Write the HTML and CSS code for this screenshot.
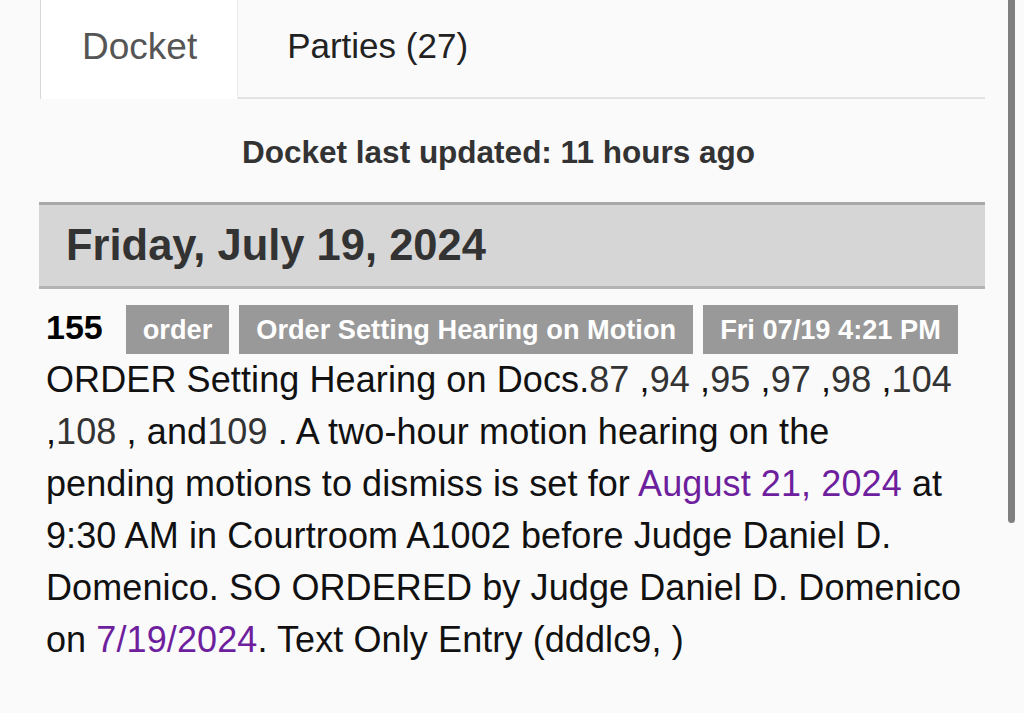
FILE: index.html
```html
<!DOCTYPE html>
<html lang="en">
<head>
<meta charset="utf-8">
<title>Docket</title>
<link rel="stylesheet" href="styles.css">
</head>
<body>
<div class="page">
  <nav class="tabs">
    <div class="tab tab-active">Docket</div>
    <div class="tab">Parties (27)</div>
  </nav>
  <p class="updated">Docket last updated: 11 hours ago</p>
  <h2 class="day">Friday, July 19, 2024</h2>
  <div class="entry">
    <div class="entry-head">
      <span class="entry-num">155</span>
      <span class="badge">order</span>
      <span class="badge">Order Setting Hearing on Motion</span>
      <span class="badge">Fri 07/19 4:21 PM</span>
    </div>
    <p class="entry-text">ORDER Setting Hearing on Docs.<a class="doc">87</a> ,<a class="doc">94</a> ,<a class="doc">95</a> ,<a class="doc">97</a> ,<a class="doc">98</a> ,<a class="doc">104</a> ,<a class="doc">108</a> , and<a class="doc">109</a> . A two-hour motion hearing on the pending motions to dismiss is set for <a class="date-link">August 21, 2024</a> at 9:30 AM in Courtroom A1002 before Judge Daniel D. Domenico. SO ORDERED by Judge Daniel D. Domenico on <a class="date-link">7/19/2024</a>. Text Only Entry (dddlc9, )</p>
  </div>
</div>
<div class="scrollbar"></div>
</body>
</html>
```
FILE: styles.css
```css
html, body {
  margin: 0;
  padding: 0;
  background: #fafafa;
  font-family: "Liberation Sans", Arial, Helvetica, sans-serif;
  color: #111;
}

.page {
  width: 945px;
  margin-left: 40px;
}

.tabs {
  display: flex;
  height: 97px;
  border-bottom: 2px solid #e2e2e2;
}

.tab {
  display: flex;
  align-items: center;
  padding: 0 49px 5px 49px;
  font-size: 35px;
  color: #222;
}

.tab-active {
  background: #fff;
  color: #555;
  font-size: 37px;
  padding: 0 40px 5px 41px;
  border-left: 1px solid #d8d8d8;
  border-right: 1px solid #ececec;
  height: 94px;
  margin-bottom: -2px;
}

.updated {
  margin: 0;
  height: 103px;
  display: flex;
  align-items: center;
  justify-content: center;
  padding-top: 4px;
  box-sizing: border-box;
  padding-right: 28px;
  font-size: 31.5px;
  font-weight: bold;
  color: #333;
}

.day {
  margin: 0 0 0 -1px;
  height: 81px;
  display: flex;
  align-items: center;
  padding-left: 27px;
  background: #d6d6d6;
  border-top: 3px solid #a9a9a9;
  border-bottom: 3px solid #b3b3b3;
  font-size: 43.5px;
  font-weight: bold;
  color: #333;
}

.entry {
  padding: 16px 0 0 6px;
}

.entry-head {
  display: flex;
  align-items: center;
  gap: 10px;
}

.entry-num {
  font-size: 34px;
  font-weight: bold;
  color: #000;
  margin-right: 13px;
  margin-top: -5px;
}

.badge {
  background: #999;
  color: #fff;
  font-weight: bold;
  font-size: 27.2px;
  line-height: 31px;
  padding: 9px 17px;
}

.entry-text {
  margin: 0;
  width: 916px;
  font-size: 36px;
  letter-spacing: 0.1px;
  line-height: 52px;
  color: #111;
}

.doc {
  color: #333;
}

.date-link {
  color: #6e1f9e;
}

.scrollbar {
  position: absolute;
  top: 0;
  left: 1008px;
  width: 7px;
  height: 523px;
  background: #808080;
  border-radius: 0 0 4px 4px;
}
```
